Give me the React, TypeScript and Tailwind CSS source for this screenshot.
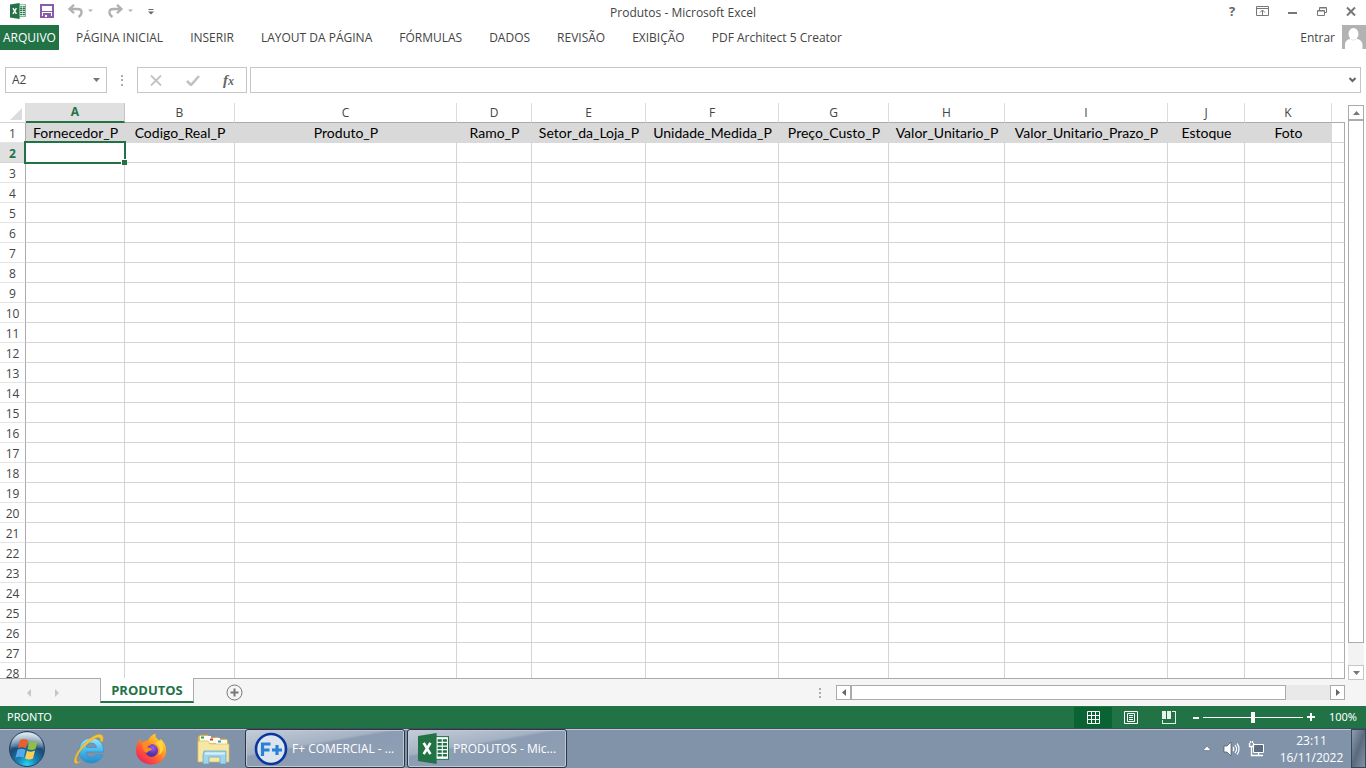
import React from "react";

const columns = [
  { letter: "A", label: "Fornecedor_P", width: 99 },
  { letter: "B", label: "Codigo_Real_P", width: 110 },
  { letter: "C", label: "Produto_P", width: 222 },
  { letter: "D", label: "Ramo_P", width: 75 },
  { letter: "E", label: "Setor_da_Loja_P", width: 114 },
  { letter: "F", label: "Unidade_Medida_P", width: 133 },
  { letter: "G", label: "Preço_Custo_P", width: 110 },
  { letter: "H", label: "Valor_Unitario_P", width: 116 },
  { letter: "I", label: "Valor_Unitario_Prazo_P", width: 163 },
  { letter: "J", label: "Estoque", width: 77 },
  { letter: "K", label: "Foto", width: 87 },
];

const rows = Array.from({ length: 28 }, (_, i) => i + 1);

const ribbonTabs = [
  "PÁGINA INICIAL",
  "INSERIR",
  "LAYOUT DA PÁGINA",
  "FÓRMULAS",
  "DADOS",
  "REVISÃO",
  "EXIBIÇÃO",
  "PDF Architect 5 Creator",
];

function ExcelLogo({ className }: { className: string }) {
  return (
    <svg viewBox="0 0 30 30" className={className} aria-hidden="true">
      <rect x="16" y="3.5" width="13.5" height="22" fill="#fff" stroke="#217346" strokeWidth="1" />
      <g fill="#217346">
        <path d="M19 6h4v2.4h-4zM24 6h4v2.4h-4zM19 9.6h4V12h-4zM24 9.6h4V12h-4zM19 13.2h4v2.4h-4zM24 13.2h4v2.4h-4zM19 16.8h4v2.4h-4zM24 16.8h4v2.4h-4zM19 20.4h4v2.4h-4zM24 20.4h4v2.4h-4z" />
        <path d="M0 3 18 0v30L0 27z" />
      </g>
      <path d="M5.500 9.500l6.500 11M12 9.500l-6.500 11" stroke="#fff" strokeWidth="2.600" />
    </svg>
  );
}

function QuickAccess() {
  return (
    <div className="flex items-center">
      <ExcelLogo className="ml-2.5 size-4" />
      <button aria-label="Salvar" className="ml-3.5">
        <svg width="14" height="14" viewBox="0 0 14 14" fill="none" className="block">
          <path d="M1 1h12v12H1z" stroke="#8b5bab" strokeWidth="2" />
          <path d="M2 7.500h10" stroke="#8b5bab" />
          <path d="M3 9h8v5H3z" fill="#8b5bab" />
          <path d="M5 11h2v2H5z" fill="#fff" />
        </svg>
      </button>
      <button aria-label="Desfazer" className="ml-3.5">
        <svg width="26" height="14" viewBox="0 0 26 14" fill="none" className="block">
          <path d="M2 5h7.500c5.500 0 5 5.500 1 8M6 .8 1.500 5 6 9.200" stroke="#b1b1b1" strokeWidth="2.300" />
          <path d="M20 5.500h5L22.500 8z" fill="#b1b1b1" />
        </svg>
      </button>
      <button aria-label="Refazer" className="ml-3.5">
        <svg width="26" height="14" viewBox="0 0 26 14" fill="none" className="block">
          <path d="M13 5H5.500C0 5 .5 10.500 4.500 13M9 .8 13.500 5 9 9.200" stroke="#b1b1b1" strokeWidth="2.300" />
          <path d="M20 5.500h5L22.500 8z" fill="#b1b1b1" />
        </svg>
      </button>
      <button aria-label="Personalizar barra de acesso rápido" className="ml-3.5">
        <svg width="6" height="8" viewBox="0 0 6 8" className="block" fill="#666">
          <path d="M.5 2h5v1h-5zM0 4.500h6L3 7.500z" />
        </svg>
      </button>
    </div>
  );
}

function WindowControls() {
  return (
    <div className="ml-auto flex items-center gap-[19px] pr-2.5">
      <button aria-label="Ajuda" className="w-2.5 text-[13px] font-bold leading-4 text-[#666]">?</button>
      <button aria-label="Opções de exibição da faixa de opções">
        <svg width="13" height="10" viewBox="0 0 13 10" className="block" fill="none" stroke="#777">
          <path d="M.5.5h12v9H.5zM.5 2.500h12M6.500 9V4.500M4 6.500l2.500-2.500L9 6.500" />
        </svg>
      </button>
      <button aria-label="Minimizar">
        <svg width="10" height="10" viewBox="0 0 10 10" className="block"><path d="M0 6h9v2H0z" fill="#777" /></svg>
      </button>
      <button aria-label="Restaurar">
        <svg width="10" height="10" viewBox="0 0 10 10" className="block" fill="none" stroke="#777">
          <path d="M2.500 4V1.500h7v5H7.500M3 2h6.500M.5 4.500h7v5h-7zM.5 5h7" />
        </svg>
      </button>
      <button aria-label="Fechar">
        <svg width="10" height="10" viewBox="0 0 10 10" className="block"><path d="M1 1.500l8 8M9 1.500l-8 8" stroke="#777" strokeWidth="2" /></svg>
      </button>
    </div>
  );
}

function Header() {
  return (
    <header>
      <div className="relative flex h-[25px] items-center pb-1">
        <QuickAccess />
        <h1 className="absolute inset-x-0 top-0 pointer-events-none text-center text-[12px] leading-[25px] text-[#444]">
          Produtos - Microsoft Excel
        </h1>
        <WindowControls />
      </div>
      <div className="flex h-[25px] text-[12px] text-[#444]">
        <button className="w-[59px] bg-[#217346] text-white">ARQUIVO</button>
        <nav className="ml-[17px] flex items-center gap-[27px]">
          {ribbonTabs.map((tab) => (
            <button key={tab}>{tab}</button>
          ))}
        </nav>
        <button className="ml-auto pr-[7px]">Entrar</button>
        <svg width="24" height="24" viewBox="0 0 24 24" aria-hidden="true">
          <path d="M0 0h24v24H0z" fill="#b2b2b2" />
          <ellipse cx="11.500" cy="9" rx="5" ry="6" fill="#fff" />
          <path d="M3 24v-4c0-5 4-6 5.500-6l3 1.500 3-1.500c1.500 0 6 1 6 6v4z" fill="#fff" />
        </svg>
      </div>
    </header>
  );
}

function FormulaBar() {
  return (
    <div className="mt-[17px] mb-2.5 flex h-[26px] pr-[5px] pl-[5px]">
      <div className="flex w-[102px] items-center border border-[#c6c6c6] bg-white">
        <input
          aria-label="Caixa de nome"
          defaultValue="A2"
          className="w-full min-w-0 bg-transparent pl-1.5 text-[12px] text-[#444] outline-none"
        />
        <button aria-label="Abrir caixa de nome" className="pr-1.5">
          <svg width="7" height="4" viewBox="0 0 7 4" className="block"><path d="M0 0h7L3.500 4z" fill="#777" /></svg>
        </button>
      </div>
      <svg width="2" height="26" viewBox="0 0 2 26" className="mx-3.5" aria-hidden="true">
        <path d="M0 8h2v2H0zM0 12h2v2H0zM0 17h2v2H0z" fill="#ababab" />
      </svg>
      <div className="mr-[3px] flex w-[110px] items-center justify-between border border-[#c6c6c6] pr-3 pl-3">
        <button aria-label="Cancelar">
          <svg width="12" height="11" viewBox="0 0 12 11" className="block"><path d="M1 .5l10 10M11 .5l-10 10" stroke="#c2c2c2" strokeWidth="1.800" /></svg>
        </button>
        <button aria-label="Inserir">
          <svg width="14" height="11" viewBox="0 0 14 11" className="block" fill="none"><path d="M1 6l4 4L13 1" stroke="#c2c2c2" strokeWidth="2.600" /></svg>
        </button>
        <button aria-label="Inserir função" className="font-['Liberation_Serif',serif] text-[15px] leading-4 font-bold text-[#666] italic">
          f<span className="text-[12px]">x</span>
        </button>
      </div>
      <div className="flex flex-1 items-center border border-[#c6c6c6]">
        <input aria-label="Barra de fórmulas" className="w-full min-w-0 px-2 text-[12px] outline-none" />
        <button aria-label="Expandir barra de fórmulas" className="pr-1">
          <svg width="7" height="6" viewBox="0 0 7 6" className="block" fill="none"><path d="M.5 1l3 3 3-3" stroke="#666" strokeWidth="2" /></svg>
        </button>
      </div>
    </div>
  );
}

function Sheet() {
  return (
    <div className="min-w-0 flex-1 overflow-hidden">
      <table className="w-full table-fixed border-separate border-spacing-0 text-center">
        <colgroup>
          <col className="w-[26px]" />
          {columns.map((c) => (
            <col key={c.letter} style={{ width: c.width }} />
          ))}
          <col />
        </colgroup>
        <thead>
          <tr className="h-5 text-[12px] leading-4 text-[#444]">
            <th className="border-r border-b border-r-[#dcdcdc] border-b-[#d4d4d4] p-0" aria-label="Selecionar tudo">
              <svg width="12" height="12" viewBox="0 0 12 12" className="mt-0.5 ml-2.5 block"><path d="M12 0v12H0z" fill="#dcdcdc" /></svg>
            </th>
            {columns.map((c, i) => (
              <th
                key={c.letter}
                className={
                  i === 0
                    ? "border-r border-b-2 border-r-[#c6c6c6] border-b-[#217346] bg-[#e0e0e0] p-0 font-bold text-[#217346]"
                    : "border-r border-b border-r-[#dcdcdc] border-b-[#ababab] p-0 font-normal"
                }
              >
                {c.letter}
              </th>
            ))}
            <th className="border-b border-[#ababab] p-0" />
          </tr>
        </thead>
        <tbody>
          {rows.map((n) => (
            <tr key={n} className="h-5 leading-4">
              <th
                className={
                  n === 2
                    ? "border-r border-b border-r-[#ababab] border-b-[#d4d4d4] bg-[#e0e0e0] p-0 pt-0.5 text-[12px] font-bold text-[#217346]"
                    : "border-r border-b border-r-[#ababab] border-b-[#e4e4e4] p-0 pt-0.5 text-[12px] font-normal text-[#444]"
                }
              >
                {n}
              </th>
              {columns.map((c, i) =>
                n === 1 ? (
                  <td key={c.letter} className="bg-[#d9d9d9] p-0 font-['Lato','Noto_Sans',sans-serif] text-[14px] whitespace-nowrap text-black">
                    {c.label}
                  </td>
                ) : (
                  <td key={c.letter} className="relative border-r border-b border-[#d4d4d4] p-0">
                    {n === 2 && i === 0 && (
                      <div className="absolute -top-0.5 -right-0.5 -bottom-0.5 -left-0.5 z-10 border-2 border-[#217346]">
                        <span className="absolute -right-[3px] -bottom-[3px] size-1.5 border-t border-l border-white bg-[#217346]" />
                      </div>
                    )}
                  </td>
                ),
              )}
              <td className={n === 1 ? "border-r border-b border-b-[#d4d4d4] border-r-[#ababab] p-0" : "border-r border-b border-r-[#ababab] border-b-[#d4d4d4] p-0"} />
            </tr>
          ))}
        </tbody>
      </table>
    </div>
  );
}

function VerticalScroll() {
  return (
    <div className="relative z-10 -mb-0.5 flex w-[21px] flex-col bg-white pt-0.5 pr-0.5 pl-[3px]">
      <button aria-label="Rolar para cima" className="flex h-[15px] items-center justify-center border border-[#ababab]">
        <svg width="7" height="4" viewBox="0 0 7 4"><path d="M0 4h7L3.500 0z" fill="#777" /></svg>
      </button>
      <div className="flex flex-1 flex-col bg-[#f3f3f3]">
        <div className="h-[96%] border border-[#ababab] bg-white" />
      </div>
      <button aria-label="Rolar para baixo" className="flex h-[15px] items-center justify-center border border-[#c6c6c6]">
        <svg width="7" height="4" viewBox="0 0 7 4"><path d="M0 0h7L3.500 4z" fill="#777" /></svg>
      </button>
    </div>
  );
}

function SheetTabs() {
  return (
    <div className="flex h-7 bg-[#f5f5f5]">
      <div className="flex w-[100px] items-center gap-6 border-t border-[#ababab] pl-[27px]">
        <button aria-label="Planilha anterior">
          <svg width="4" height="8" viewBox="0 0 4 8" className="block"><path d="M4 0v8L0 4z" fill="#c6c6c6" /></svg>
        </button>
        <button aria-label="Próxima planilha">
          <svg width="4" height="8" viewBox="0 0 4 8" className="block"><path d="M0 0v8l4-4z" fill="#c6c6c6" /></svg>
        </button>
      </div>
      <button className="h-[25px] w-[94px] border-x border-b-2 border-x-[#ababab] border-b-[#217346] bg-white pt-0.5 text-[13px] font-bold text-[#217346]">
        PRODUTOS
      </button>
      <div className="flex flex-1 items-center border-t border-[#ababab] pr-[21px] pl-8">
        <button aria-label="Nova planilha">
          <svg width="17" height="17" viewBox="0 0 17 17" className="block" fill="none" stroke="#777">
            <circle cx="8.500" cy="8.500" r="7.500" />
            <path d="M8.500 4.500v8M4.500 8.500h8" strokeWidth="2" />
          </svg>
        </button>
        <svg width="2" height="10" viewBox="0 0 2 10" className="mr-[15px] ml-auto"><path d="M0 0h2v2H0zM0 4h2v2H0zM0 8h2v2H0z" fill="#ababab" /></svg>
        <div className="flex h-[15px] w-[509px]">
          <button aria-label="Rolar para a esquerda" className="flex w-[15px] items-center justify-center border border-[#ababab] bg-white">
            <svg width="4" height="7" viewBox="0 0 4 7"><path d="M4 0v7L0 3.500z" fill="#666" /></svg>
          </button>
          <div className="flex-1 bg-[#e9e9e9]">
            <div className="h-full w-[435px] border border-[#ababab] bg-white" />
          </div>
          <button aria-label="Rolar para a direita" className="flex w-[15px] items-center justify-center border border-[#ababab] bg-white">
            <svg width="4" height="7" viewBox="0 0 4 7"><path d="M0 0v7l4-3.500z" fill="#666" /></svg>
          </button>
        </div>
      </div>
    </div>
  );
}

function StatusBar() {
  return (
    <footer className="flex h-[22px] items-center bg-[#217346] pr-[9px] pl-[7px] text-[11px] text-white">
      <span className="font-['Noto_Sans',sans-serif]">PRONTO</span>
      <div className="ml-auto flex h-full">
        <button aria-label="Normal" className="mt-px flex w-[38px] items-center justify-center bg-[#0a6332]">
          <svg width="13" height="13" viewBox="0 0 13 13" fill="none" stroke="#fff"><path d="M.5.5h12v12H.5zM4.500 0v13M8.500 0v13M0 4.500h13M0 8.500h13" /></svg>
        </button>
        <button aria-label="Layout da página" className="flex w-[38px] items-center justify-center">
          <svg width="14" height="13" viewBox="0 0 14 13" fill="none" stroke="#fff"><path d="M.5.5h13v12H.5zM3.500 2.500h7v8h-7zM5 4.500h4M5 6.500h4M5 8.500h4" /></svg>
        </button>
        <button aria-label="Visualização da quebra de página" className="flex w-[38px] items-center justify-center">
          <svg width="14" height="13" viewBox="0 0 14 13"><path d="M0 0h4v8H0zM5 0h4v8H5zM10 0h4v13H0V9h1v3h12V1h-3z" fill="#e8f1ec" /></svg>
        </button>
      </div>
      <button aria-label="Diminuir zoom" className="ml-[5px]">
        <svg width="6" height="9" viewBox="0 0 6 9" className="block"><path d="M0 4h6v2H0z" fill="#fff" /></svg>
      </button>
      <input
        type="range"
        aria-label="Zoom"
        min="0"
        max="200"
        defaultValue="100"
        className="mx-1 h-3 w-[100px] appearance-none bg-[linear-gradient(#fff,#fff)] bg-[length:100%_1px] bg-center bg-no-repeat [&::-webkit-slider-thumb]:h-[11px] [&::-webkit-slider-thumb]:w-1 [&::-webkit-slider-thumb]:appearance-none [&::-webkit-slider-thumb]:bg-white"
      />
      <button aria-label="Aumentar zoom">
        <svg width="8" height="8" viewBox="0 0 8 8" className="block"><path d="M3 0h2v3h3v2H5v3H3V5H0V3h3z" fill="#fff" /></svg>
      </button>
      <span className="w-[42px] text-right font-['Noto_Sans',sans-serif]">100%</span>
    </footer>
  );
}

function WindowsOrb() {
  return (
    <svg width="38" height="38" viewBox="0 0 38 38" className="block">
      <defs>
        <radialGradient id="orb" cx="50%" cy="95%" r="90%">
          <stop offset="0" stopColor="#27d5f7" />
          <stop offset=".3" stopColor="#1685b8" />
          <stop offset=".65" stopColor="#1d4a75" />
          <stop offset="1" stopColor="#8aa9c2" />
        </radialGradient>
        <linearGradient id="gloss" x2="0" y2="1">
          <stop stopColor="#fff" stopOpacity=".75" />
          <stop offset="1" stopColor="#fff" stopOpacity=".1" />
        </linearGradient>
      </defs>
      <circle cx="19" cy="19" r="17.500" fill="url(#orb)" stroke="#24435f" />
      <path d="M3 17C3 8 10 2.500 19 2.500S35 8 35 17c-7 3-12-1-16-1S9 19 3 17z" fill="url(#gloss)" />
      <path d="M12 10c3-1.700 5.500-1 8 .2l-2 8c-3-1.400-5.300-1.400-8 0z" fill="#e8602c" />
      <path d="M21.500 11c3 1.400 5.500 1 8-.3l-2 8.200c-2.600 1.300-5 1.300-8 0z" fill="#8fc045" />
      <path d="M9.500 19.800c3-1.300 5.300-1.200 8 .1l-2 7.800c-2.700-1.400-5.300-1.400-8 0z" fill="#55a9e8" />
      <path d="M19 20.800c3 1.200 5.300 1.200 8-.2l-2 8c-2.800 1.400-5.300 1.200-8 0z" fill="#fbd04e" />
    </svg>
  );
}

function ExplorerIcon() {
  return (
    <svg width="32" height="32" viewBox="0 0 32 32" className="block">
      <defs>
        <linearGradient id="ie" x2="0" y2="1">
          <stop stopColor="#a7e6fb" />
          <stop offset=".5" stopColor="#45b9ec" />
          <stop offset="1" stopColor="#2389cf" />
        </linearGradient>
      </defs>
      <path
        d="M29.500 19H12c.3 3.500 2.500 5.300 5.300 5.300 2.300 0 3.600-1 4.400-2.500h7.100C27 27 22.700 30 17.300 30 10.200 30 5 25 5 17.500S10.500 5 17.500 5s12.600 5 12 14zM12.200 14.500h10.300c-.5-2.900-2.300-4.500-5-4.500-2.800 0-4.700 1.600-5.300 4.500z"
        fill="url(#ie)"
        stroke="#2e8dca"
        strokeWidth=".6"
      />
      <path d="M26 8c1-3-.5-4.500-4-3C14 8.500 3 20 2.500 26.500c-.2 3 2 3 5 1.500-4.500 3.500-8.500 3.500-7-2C2.500 18 13 5.500 22 2c6-2.300 8.500 1 6.500 7z" fill="#f6c335" stroke="#d79c1d" strokeWidth=".4" />
    </svg>
  );
}

function FirefoxIcon() {
  return (
    <svg width="32" height="32" viewBox="0 0 32 32" className="block">
      <defs>
        <linearGradient id="fox" x1="1" x2=".2" y2="1">
          <stop stopColor="#fff04b" />
          <stop offset=".4" stopColor="#ffa21f" />
          <stop offset=".75" stopColor="#ff4a3d" />
          <stop offset="1" stopColor="#e32465" />
        </linearGradient>
        <radialGradient id="globe" cx=".6" cy=".3">
          <stop stopColor="#9a5bf4" />
          <stop offset="1" stopColor="#5233a8" />
        </radialGradient>
      </defs>
      <path d="M4.500 6l3 3.500C9 8 11 7.500 13 7.500 14 5 17 1.500 20.500.5c-.5 4 1.500 5 4 7L26 6c4 4 5.500 8 5 13-.8 8-7.500 12.500-15 12.500S1.500 26 1 19c-.2-5 1.500-9 3.500-13z" fill="url(#fox)" />
      <circle cx="16.500" cy="17.500" r="6.500" fill="url(#globe)" />
      <path d="M7.500 9.500C10 8 14 9 16.500 12c-2 .3-4 1.200-4 2.500 2 .3 4 .5 4.500 2-2 1.500-4 1.500-5 3.500-3-1-5-4-4.500-10.500z" fill="#ff8a22" />
      <path d="M20 10c4 2 6.500 7 3.500 12 6-3 6.500-10 2.500-15-2 1-4.500 1.500-6 3z" fill="#ffd43c" />
    </svg>
  );
}

function FolderIcon() {
  return (
    <svg width="34" height="32" viewBox="0 0 34 32" className="block">
      <path d="M2 4l2-2h8l1 3 9-1 1 2h8l1 3v19H2z" fill="#e5c767" stroke="#c3a24a" strokeWidth=".7" />
      <path d="M4 3h11v5H4zM12 5h12v5H12zM20 7h11v4H20z" fill="#fffdf3" />
      <path d="M5 3.500h3v2H5z" fill="#29a73b" />
      <path d="M14 5.500h3v2h-3z" fill="#d83c2d" />
      <path d="M22 7.500h3v2h-3z" fill="#3299dc" />
      <path d="M2 8h10l2 3h19v18H2z" fill="#f7e7a4" stroke="#d5b95f" strokeWidth=".7" />
      <path d="M8 18h22v13h-6v-7H13v7H7v-9z" fill="#9fd4ea" stroke="#5aa6c9" strokeWidth=".7" />
      <path d="M9 19.500h20v2H9z" fill="#d9f2fa" />
    </svg>
  );
}

function TaskButton({ children, icon }: { children: React.ReactNode; icon: React.ReactNode }) {
  return (
    <button className="flex h-[39px] w-40 items-center gap-1 rounded-[3px] border border-[#2c3642] bg-[linear-gradient(170deg,#c5ced9_0%,#a5b2c3_38%,#8c9db3_42%,#8fa0b5_100%)] pl-2 text-[12px] whitespace-nowrap text-white shadow-[inset_0_0_0_1px_#c0cad6]">
      {icon}
      <span>{children}</span>
    </button>
  );
}

function Taskbar() {
  return (
    <div className="flex h-10 items-center border-t border-[#3c4f5b] bg-[#8193a9] text-white shadow-[inset_0_1px_0_#bcc8d6]">
      <button aria-label="Iniciar" className="ml-2"><WindowsOrb /></button>
      <button aria-label="Internet Explorer" className="ml-7"><ExplorerIcon /></button>
      <button aria-label="Firefox" className="ml-[29px]"><FirefoxIcon /></button>
      <button aria-label="Windows Explorer" className="mr-[15px] ml-[29px]"><FolderIcon /></button>
      <div className="flex gap-0.5">
        <TaskButton
          icon={
            <svg width="34" height="34" viewBox="0 0 34 34">
              <circle cx="17" cy="17" r="15" fill="#dce4ed" stroke="#0a36a0" strokeWidth="2.600" />
              <path d="M8.500 24V12h8M8.500 18h7M18 18h10M23 13v10" fill="none" stroke="#2880d8" strokeWidth="3.200" />
            </svg>
          }
        >
          F+ COMERCIAL - ...
        </TaskButton>
        <TaskButton icon={<ExcelLogo className="ml-0.5 size-[31px]" />}>PRODUTOS - Mic...</TaskButton>
      </div>
      <div className="ml-auto flex items-center">
        <button aria-label="Mostrar ícones ocultos">
          <svg width="8" height="5" viewBox="0 0 8 5" className="block"><path d="M0 4.500h8L4 0z" fill="#fff" stroke="#4a5868" strokeWidth=".5" /></svg>
        </button>
        <button aria-label="Volume" className="ml-3">
          <svg width="17" height="16" viewBox="0 0 17 16" className="block" fill="none">
            <path d="M1 5h3l4-4v14l-4-4H1z" fill="#fff" stroke="#435164" strokeWidth=".7" />
            <path d="M10 6c1 1.200 1 2.800 0 4M12 4c2 2.500 2 5.500 0 8M14 2.500c2.700 3.200 2.700 7.800 0 11" stroke="#fff" strokeWidth="1.200" />
          </svg>
        </button>
        <button aria-label="Rede" className="ml-2">
          <svg width="17" height="16" viewBox="0 0 17 16" className="block" fill="none" stroke="#fff">
            <path d="M5.500 3.500h10v8h-10z" fill="#5c6c80" />
            <path d="M7 14.500h8M10.500 12v2M1.500 2v3.500h4V2M2.500 0v2M4.500 0v2M3.500 6v8.500H7" strokeWidth="1.300" />
          </svg>
        </button>
        <time className="mr-[5px] ml-3 w-[69px] text-center text-[12px] leading-[17px]">
          23:11
          <br />
          16/11/2022
        </time>
        <button aria-label="Mostrar área de trabalho" className="h-[39px] w-[15px] border border-[#38475a] bg-[linear-gradient(110deg,#8e9caf,#5b6b7f_50%,#8391a5)]" />
      </div>
    </div>
  );
}

export default function App() {
  return (
    <div className="flex h-screen flex-col overflow-hidden bg-white font-['Open_Sans','Noto_Sans',sans-serif]">
      <Header />
      <FormulaBar />
      <main className="flex min-h-0 flex-1">
        <Sheet />
        <VerticalScroll />
      </main>
      <SheetTabs />
      <StatusBar />
      <Taskbar />
    </div>
  );
}
